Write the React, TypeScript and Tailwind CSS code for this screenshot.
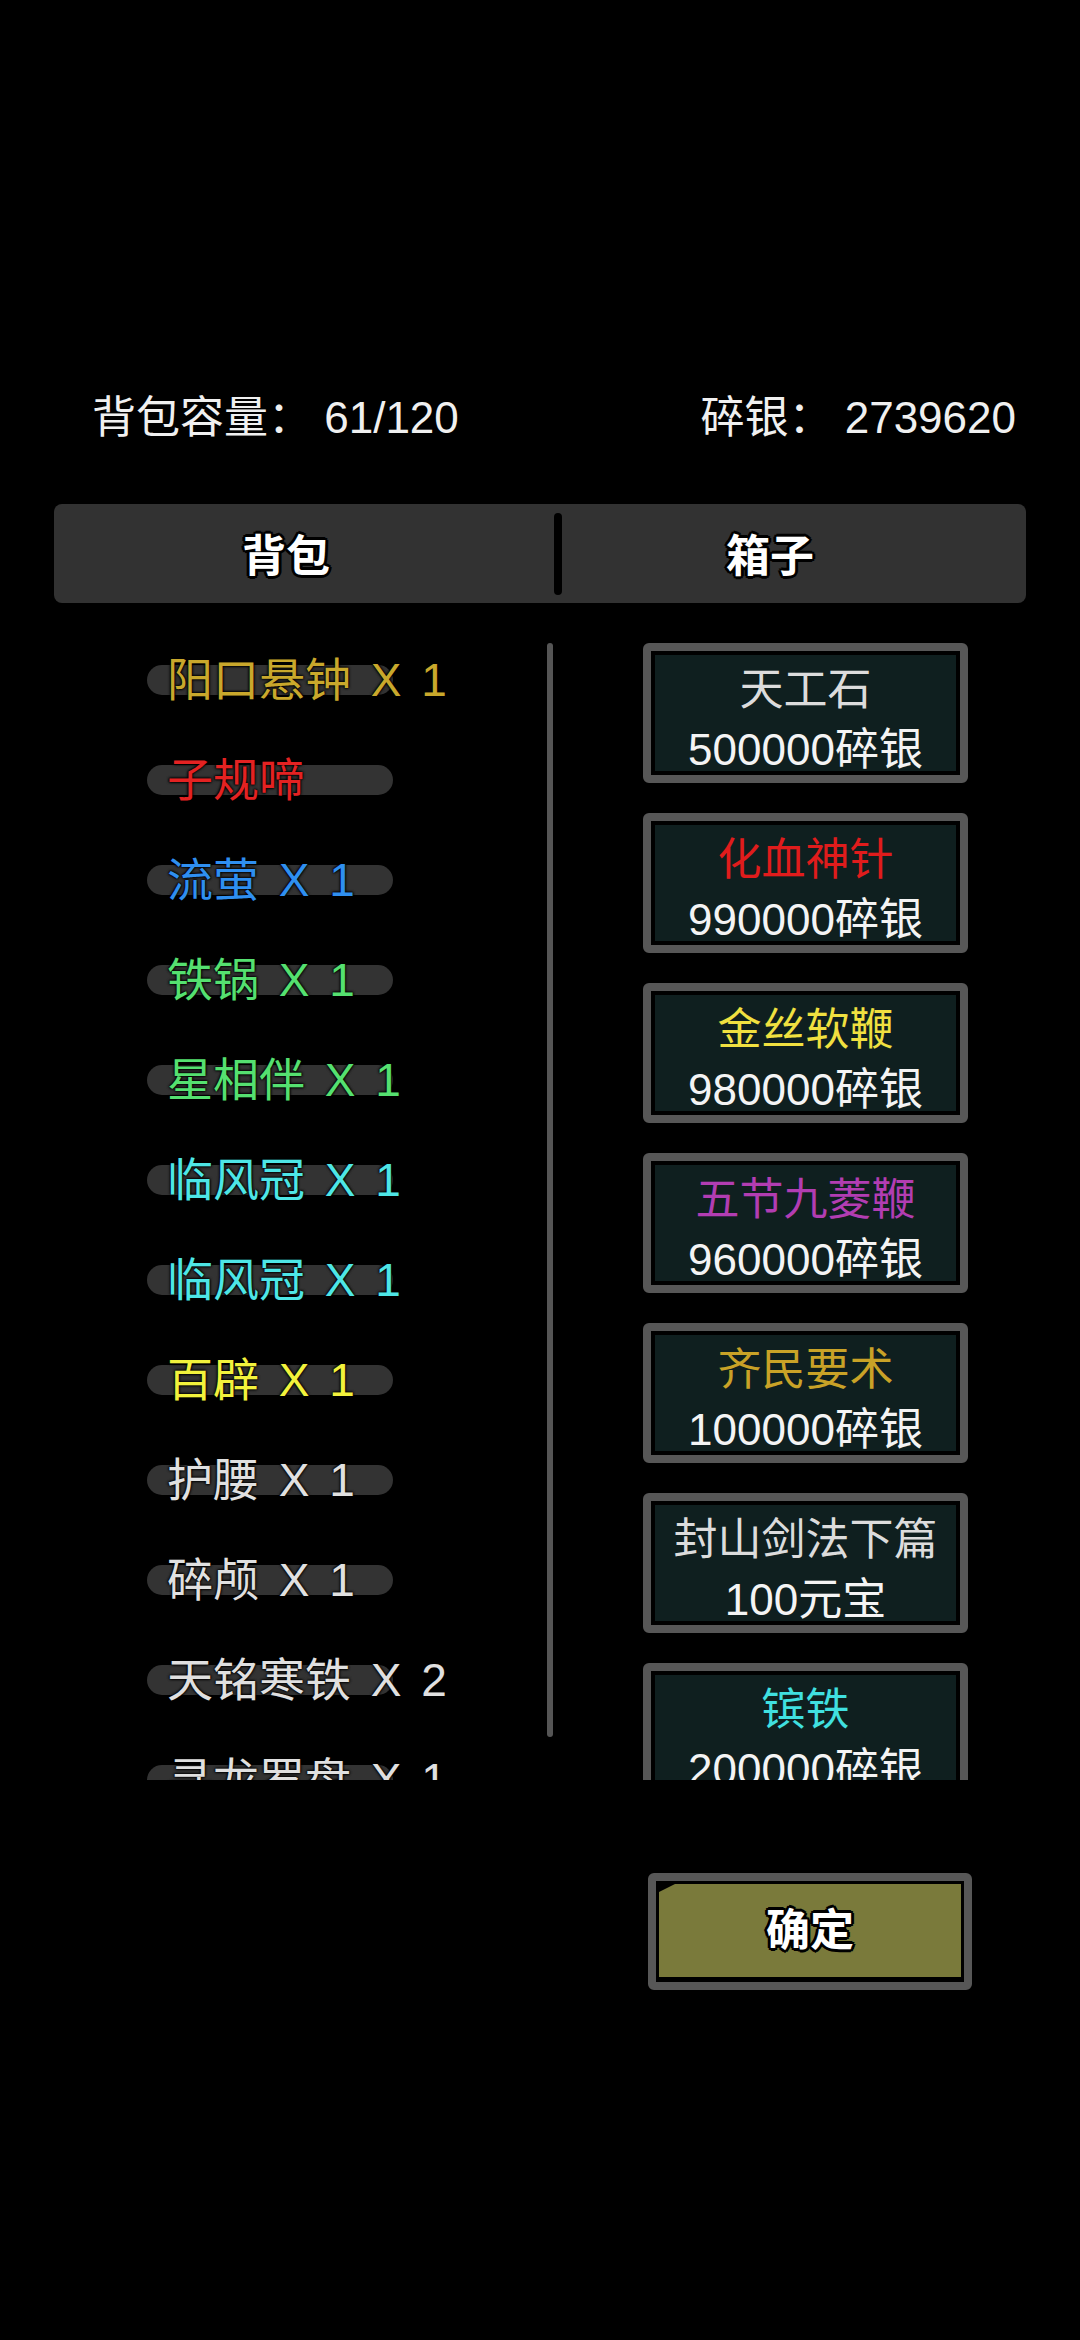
import React from "react"

type BagItem = { name: string; count?: number; color: string }
type ShopItem = { name: string; price: string; color: string }

const bagItems: BagItem[] = [
  { name: "阳口悬钟", count: 1, color: "text-[#c9a82c]" },
  { name: "子规啼", color: "text-[#e42222]" },
  { name: "流萤", count: 1, color: "text-[#2f8ff0]" },
  { name: "铁锅", count: 1, color: "text-[#55e070]" },
  { name: "星相伴", count: 1, color: "text-[#55e070]" },
  { name: "临风冠", count: 1, color: "text-[#4ee6e6]" },
  { name: "临风冠", count: 1, color: "text-[#4ee6e6]" },
  { name: "百辟", count: 1, color: "text-[#f2f23c]" },
  { name: "护腰", count: 1, color: "text-[#e0e0e0]" },
  { name: "碎颅", count: 1, color: "text-[#e0e0e0]" },
  { name: "天铭寒铁", count: 2, color: "text-[#e0e0e0]" },
  { name: "寻龙罗盘", count: 1, color: "text-[#e0e0e0]" },
]

const shopItems: ShopItem[] = [
  { name: "天工石", price: "500000碎银", color: "text-[#dcdcdc]" },
  { name: "化血神针", price: "990000碎银", color: "text-[#e01c1c]" },
  { name: "金丝软鞭", price: "980000碎银", color: "text-[#f0e040]" },
  { name: "五节九菱鞭", price: "960000碎银", color: "text-[#b23db2]" },
  { name: "齐民要术", price: "100000碎银", color: "text-[#c9a227]" },
  { name: "封山剑法下篇", price: "100元宝", color: "text-[#dcdcdc]" },
  { name: "镔铁", price: "200000碎银", color: "text-[#40e0e0]" },
]

// thick black outline used on tab labels and the confirm button
const outline =
  "[text-shadow:-3px_0_0_#000,3px_0_0_#000,0_-3px_0_#000,0_3px_0_#000,-2px_-2px_0_#000,2px_2px_0_#000,-2px_2px_0_#000,2px_-2px_0_#000]"

export default function App() {
  return (
    <div className="min-h-[2340px] w-[1080px] bg-black text-white [font-family:'Liberation_Sans','Noto_Sans_CJK_SC',sans-serif]">
      {/* 容量 / 碎银 */}
      <div className="box-content flex h-[60px] items-center justify-between pt-[388px] pl-[92px] pr-[64px] text-[44px] leading-none text-[#f0f0f0]">
        <span>背包容量：&nbsp;61/120</span>
        <span>碎银：&nbsp;2739620</span>
      </div>

      {/* tabs */}
      <div className="mx-[54px] mt-[56px] flex h-[99px] items-center rounded-[8px] bg-[#323232]">
        <div className={`flex w-[500px] justify-center pt-[6px] pr-[36px] text-[44px] font-bold leading-none ${outline}`}>背包</div>
        <div className="h-[82px] w-[8px] rounded-full bg-black" />
        <div className={`flex flex-1 justify-center pt-[6px] pr-[48px] text-[44px] font-bold leading-none ${outline}`}>箱子</div>
      </div>

      {/* lists */}
      <div className="mt-[27px] flex h-[1150px]">
        <div className="flex w-[553px]">
          <div className="h-[1150px] flex-1 overflow-hidden pl-[147px]">
            {bagItems.map((item, i) => (
              <div key={i} className="flex h-[100px] items-center">
                <div className="flex h-[30px] w-[246px] items-center whitespace-nowrap rounded-full bg-[#333333] pl-[20px]">
                  <span
                    className={`text-[46px] leading-none [word-spacing:7px] ${item.color} [text-shadow:0_0_3px_#000,0_0_3px_#000,0_0_2px_#000]`}
                  >
                    {item.name}
                    {item.count !== undefined && ` X ${item.count}`}
                  </span>
                </div>
              </div>
            ))}
          </div>
          <div className="mt-[13px] h-[1094px] w-[6px] rounded-full bg-[#555555]" />
        </div>

        <div className="ml-[90px] flex h-[1150px] w-[325px] flex-col gap-[30px] overflow-hidden pt-[13px]">
          {shopItems.map((item, i) => (
            <div key={i} className="h-[140px] shrink-0 rounded-[6px] border-[8px] border-[#575757] bg-black p-[4px]">
              <div className="flex h-full flex-col items-center justify-center bg-[#0f1f1f] pt-[14px] text-[44px] leading-[60px]">
                <span className={`whitespace-nowrap ${item.color}`}>{item.name}</span>
                <span className="whitespace-nowrap text-[#f4f4f4]">{item.price}</span>
              </div>
            </div>
          ))}
        </div>
      </div>

      {/* 确定 */}
      <div className="ml-[648px] mt-[93px] h-[117px] w-[324px] rounded-[6px] border-[8px] border-[#575757] bg-black p-[3px] pb-[5px]">
        <div className="flex h-full items-center justify-center bg-[#7a7a3b] [clip-path:polygon(16px_0,100%_0,100%_100%,0_100%,0_8px)]">
          <span className={`text-[44px] font-bold leading-none text-white ${outline}`}>确定</span>
        </div>
      </div>
    </div>
  )
}
